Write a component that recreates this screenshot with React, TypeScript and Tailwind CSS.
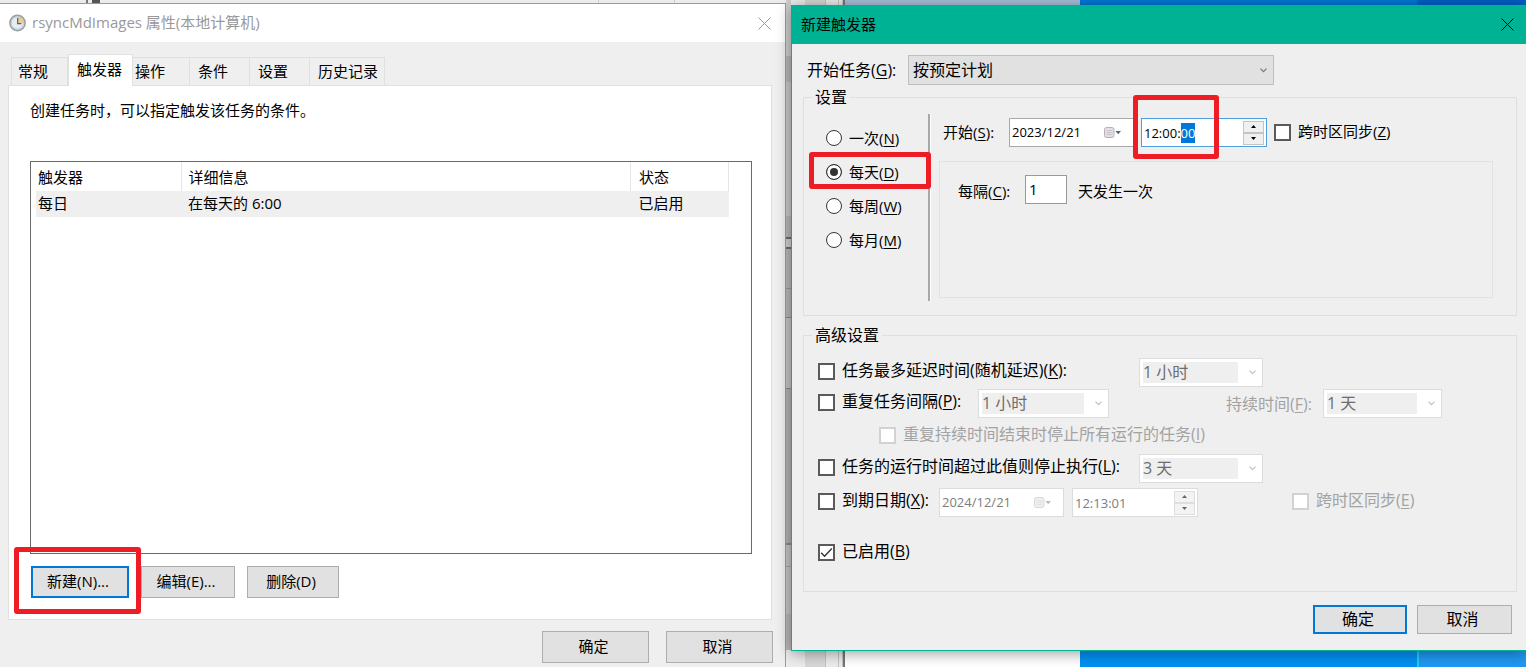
import { ReactNode, useEffect, useRef, useState } from "react";
import clsx from "clsx";

const tabs = ["常规", "触发器", "操作", "条件", "设置", "历史记录"];

const schedules = [
  { id: "once", text: "一次", hotkey: "N" },
  { id: "daily", text: "每天", hotkey: "D" },
  { id: "weekly", text: "每周", hotkey: "W" },
  { id: "monthly", text: "每月", hotkey: "M" },
];

function Hotkey({ children }: { children: string }) {
  return (
    <>
      (<span className="underline underline-offset-2">{children}</span>)
    </>
  );
}

function CloseIcon() {
  return (
    <svg width="13" height="13" viewBox="0 0 13 13" fill="none" stroke="currentColor" strokeWidth="1">
      <path d="M0.5 0.5l12 12M12.5 0.5l-12 12" />
    </svg>
  );
}

function ClockIcon() {
  return (
    <svg width="18" height="18" viewBox="0 0 18 18" fill="none">
      <circle cx="9.5" cy="9" r="7.6" fill="#e4edf3" stroke="#9aa0a4" strokeWidth="1.6" />
      <path d="M9.5 9V2.6A6.4 6.4 0 0 1 15.9 9z" fill="#ecd08c" />
      <circle cx="9.5" cy="9" r="6.2" stroke="#b9cad6" strokeWidth="0.9" />
      <path d="M9.7 4v5.6h3.8" stroke="#5d6468" strokeWidth="1.3" />
    </svg>
  );
}

function Chevron() {
  return (
    <svg width="7" height="5" viewBox="0 0 7 5" fill="none" stroke="currentColor" strokeWidth="1.2">
      <path d="M0.5 0.7l3 3 3-3" />
    </svg>
  );
}

// Red rectangle drawn around the control that the reader has to use
function Highlight({ className }: { className: string }) {
  return (
    <span
      className={clsx("pointer-events-none absolute z-10 rounded-[3px] border-5 border-[#ee1c25]", className)}
    />
  );
}

function Button({ children, primary, className }: { children: ReactNode; primary?: boolean; className?: string }) {
  return (
    <button
      type="button"
      className={clsx(
        "bg-[#e1e1e1] pb-0.5 text-black",
        primary ? "border-2 border-[#0078d7]" : "border border-[#adadad]",
        className
      )}
    >
      {children}
    </button>
  );
}

type CheckProps = {
  id: string;
  children: ReactNode;
  disabled?: boolean;
  defaultChecked?: boolean;
  className?: string;
};

function Check({ id, children, disabled, defaultChecked, className }: CheckProps) {
  return (
    <div className={clsx("flex h-[26px] shrink-0 items-center gap-[7px]", disabled && "text-[#a3a3a3]", className)}>
      <span className="relative flex">
        <input
          id={id}
          type="checkbox"
          disabled={disabled}
          defaultChecked={defaultChecked}
          className="peer size-[17px] appearance-none border-2 border-[#5a5a5a] bg-white disabled:border-[#d2d2d2]"
        />
        <svg
          viewBox="0 0 17 17"
          fill="none"
          stroke="#333"
          strokeWidth="1.4"
          className="pointer-events-none absolute inset-0 hidden size-[17px] peer-checked:block"
        >
          <path d="M3.2 8.8l3.4 3.4 7.2-7.6" />
        </svg>
      </span>
      <label htmlFor={id} className="whitespace-nowrap pb-0.5">
        {children}
      </label>
    </div>
  );
}

function DisabledSelect({ id, label, value, className }: { id: string; label?: string; value: string; className: string }) {
  return (
    <div className={clsx("flex h-[29px] shrink-0 items-center border border-[#dcdcdc] bg-white py-[3px] pl-[3px]", className)}>
      <select
        id={id}
        aria-label={label}
        disabled
        className="h-full min-w-0 flex-1 appearance-none bg-[#efefef] pb-0.5 leading-5 text-[#6d6d6d] opacity-100"
      >
        <option>{value}</option>
      </select>
      <span className="flex w-6 justify-center pl-1 text-[#c0c0c0]">
        <Chevron />
      </span>
    </div>
  );
}

function DateBox({ id, label, value, disabled }: { id: string; label?: string; value: string; disabled?: boolean }) {
  return (
    <div
      className={clsx(
        "flex h-[29px] w-[125px] shrink-0 items-center border bg-white pr-3 pl-0.5 text-[13px]",
        disabled ? "border-[#dcdcdc] text-[#7d7d7d]" : "border-[#a9a9a9] text-black"
      )}
    >
      <input id={id} aria-label={label} defaultValue={value} disabled={disabled} className="w-full min-w-0 flex-1 outline-none" />
      <svg width="17" height="12" viewBox="0 0 17 12" className={clsx("shrink-0", disabled && "opacity-50")}>
        <rect x="0.5" y="0.5" width="9.5" height="10" rx="2" fill="#e4dfe2" stroke="#b5b0b8" />
        <path d="M2.5 3.5h6M2.5 5.5h6M2.5 7.5h5" stroke="#c2bdc4" strokeWidth="0.8" />
        <path d="M11.5 4h5.5L14.2 7.2z" fill={disabled ? "#777" : "#4a5f8f"} />
      </svg>
    </div>
  );
}

function Spinner({ disabled }: { disabled?: boolean }) {
  const button = clsx(
    "flex h-3 w-[21px] items-center justify-center border",
    disabled ? "border-[#dedede] bg-[#f3f3f3] text-[#666]" : "border-[#c4c4c4] bg-[#f0f0f0] text-black"
  );
  return (
    <div className="flex shrink-0 flex-col">
      <button type="button" aria-label="增加" disabled={disabled} className={button}>
        <svg width="5" height="3" viewBox="0 0 5 3">
          <path d="M0 3h5L2.5 0z" fill="currentColor" />
        </svg>
      </button>
      <button type="button" aria-label="减少" disabled={disabled} className={button}>
        <svg width="5" height="3" viewBox="0 0 5 3">
          <path d="M0 0h5L2.5 3z" fill="currentColor" />
        </svg>
      </button>
    </div>
  );
}

function TimeBox({ label, value, disabled }: { label: string; value: string; disabled?: boolean }) {
  const input = useRef<HTMLInputElement>(null);

  // The seconds are the part being edited
  useEffect(() => {
    if (disabled) return;
    input.current?.focus();
    input.current?.setSelectionRange(6, 8);
  }, [disabled]);

  return (
    <div
      className={clsx(
        "flex h-[29px] w-[126px] items-center border bg-white px-0.5 text-[13px]",
        disabled ? "border-[#dcdcdc] text-[#7d7d7d]" : "border-[#4f9fe0] text-black"
      )}
    >
      <input
        ref={input}
        aria-label={label}
        defaultValue={value}
        disabled={disabled}
        className="h-5 min-w-0 flex-1 leading-5 outline-none selection:bg-[#0078d7] selection:text-white"
      />
      <Spinner disabled={disabled} />
    </div>
  );
}

function Desktop() {
  return (
    <div aria-hidden="true" className="absolute inset-0 flex overflow-hidden">
      <div className="flex flex-[843] bg-[#ececec]">
        <div className="flex-[86]" />
        <div className="w-0.5 bg-[#777]" />
        <div className="w-1" />
        <div className="w-2 bg-[#555]" />
        <div className="flex-[499] border-r border-[#cfcfcf]" />
        <div className="flex-[75] border-r border-[#cfcfcf]" />
        <div className="flex-[130]" />
        <div className="w-5 bg-[#d8d8d8]" />
        <div className="w-3.5 border-x border-[#c4c4c4]" />
        <div className="w-1 border-r border-[#c4c4c4]" />
      </div>
      <div className="w-0.5 bg-[#777]" />
      <div className="flex flex-[235] flex-col bg-white">
        <div className="h-10 bg-[#a9bfdb]" />
      </div>
      <div className="flex-[337] bg-linear-to-b from-[#0078d7] to-[#0290f4]" />
      <div className="w-0.5 bg-linear-to-b from-[#0068cc] to-[#20d0f0]" />
      <div className="flex-[107] bg-linear-to-b from-[#0060c8] to-[#2098f4]" />
    </div>
  );
}

// Sliver of the main window that shows between the two dialogs
function Gap() {
  return (
    <div aria-hidden="true" className="flex h-[650px] w-[5px] flex-col bg-[#c6c6c6]">
      <div className="h-14 bg-[#cfcfcf]" />
      <div className="h-[26px] bg-[#b9b9b9]" />
      <div className="h-[134px] bg-[#cbcbcb]" />
      <div className="h-[21px] bg-[#b9b9b9]" />
      <div className="h-3 border-y-2 border-[#6e6e6e] bg-[#d0d0d0]" />
      <div className="h-10 border-b border-[#999] bg-[#b9b9b9]" />
      <div className="h-[29px] border-b border-[#8b8b8b] bg-[#b9b9b9]" />
      <div className="h-[71px] border-b border-[#8b8b8b]" />
      <div className="h-[156px] border-b-2 border-[#8b8b8b] bg-[#b4b4b4]" />
      <div className="h-[22px] border-b border-[#a5a5a5]" />
      <div className="h-[47px]" />
      <div className="flex-1 bg-[#b9b9b9]" />
    </div>
  );
}

function PropertiesWindow() {
  const [active, setActive] = useState("触发器");

  return (
    <section className="mt-[3px] flex flex-col border-t border-r border-[#9b9b9b] bg-[#efefef]">
      <header className="flex h-[38px] items-center bg-white pr-[14px] pl-2 text-[#999]">
        <ClockIcon />
        <h1 className="ml-1.5 flex-1 pb-0.5">rsyncMdImages 属性(本地计算机)</h1>
        <button type="button" aria-label="关闭">
          <CloseIcon />
        </button>
      </header>

      <div className="flex flex-1 flex-col pt-3 pr-3 pb-1 pl-2">
        <div role="tablist" className="flex items-end pl-[3px]">
          {tabs.map((tab) => (
            <button
              key={tab}
              type="button"
              role="tab"
              aria-selected={tab === active}
              onClick={() => setActive(tab)}
              className={clsx(
                "border-[#e0e0e0] text-left",
                tab === active
                  ? "relative -mb-px h-8 w-[65px] border-x border-t bg-white pb-1 pl-2"
                  : "h-7 border-t border-r pb-0.5",
                tab === "常规" && "w-[57px] border-l pl-1.5",
                tab === "操作" && "w-[57px] pl-0.5",
                (tab === "条件" || tab === "设置") && "w-[60px] pl-2",
                tab === "历史记录" && "w-[75px] pl-2"
              )}
            >
              {tab}
            </button>
          ))}
        </div>

        <div className="mr-px flex flex-1 flex-col border border-[#e0e0e0] bg-white px-[21px] pb-[21px]">
          <p className="mt-[13px] leading-[22px]">创建任务时，可以指定触发该任务的条件。</p>

          <div className="mt-10 mr-[-2px] flex-1 border border-[#6a6a6a] pr-[22px] pl-[5px]">
            <table className="w-full table-fixed border-collapse text-left">
              <colgroup>
                <col className="w-[145px]" />
                <col />
                <col className="w-[98px]" />
              </colgroup>
              <thead>
                <tr className="h-[29px]">
                  <th className="border-r border-[#e5e5e5] pl-0.5 font-normal">触发器</th>
                  <th className="border-r border-[#e5e5e5] pl-[7px] font-normal">详细信息</th>
                  <th className="border-r border-[#e5e5e5] pl-2 font-normal">状态</th>
                </tr>
              </thead>
              <tbody>
                <tr className="h-[26px] bg-[#efefef]">
                  <td className="pb-0.5 pl-0.5">每日</td>
                  <td className="pb-0.5 pl-[7px]">在每天的 6:00</td>
                  <td className="pb-0.5 pl-2">已启用</td>
                </tr>
              </tbody>
            </table>
          </div>

          <div className="mt-3 ml-px flex h-8">
            <div className="relative flex">
              <Button primary className="w-[98px] pr-1">
                新建(N)...
              </Button>
              <Highlight className="-top-[19px] -right-3 -bottom-4 -left-[17px]" />
            </div>
            <Button className="ml-3 w-[94px] pr-1">编辑(E)...</Button>
            <Button className="ml-3 w-[92px] pr-1">删除(D)</Button>
          </div>
        </div>

        <footer className="mt-[11px] flex h-8 justify-end gap-[17px]">
          <Button className="w-[107px] pr-1">确定</Button>
          <Button className="w-[107px] pr-1">取消</Button>
        </footer>
      </div>
    </section>
  );
}

function TriggerWindow() {
  const [schedule, setSchedule] = useState("daily");

  return (
    <section className="relative mt-[5px] flex flex-col self-start border-b border-l border-[#00b294] bg-[#efefef] shadow-[0_2px_14px_rgba(0,0,0,0.4)]">
      <header className="flex h-[39px] items-center bg-[#00b294] pr-3 pl-[9px] text-black">
        <h2 className="flex-1 pb-0.5">新建触发器</h2>
        <button type="button" aria-label="关闭">
          <CloseIcon />
        </button>
      </header>

      <div className="pt-[11px] pr-[9px] pb-4 pl-[11px] text-base">
        <div className="flex h-[30px] items-center pl-1">
          <label htmlFor="begin" className="w-[101px] shrink-0">
            开始任务<Hotkey>G</Hotkey>:
          </label>
          <div className="relative h-full w-[366px]">
            <select id="begin" className="h-full w-full appearance-none border border-[#bfbfbf] bg-[#e1e1e1] pl-1">
              <option>按预定计划</option>
            </select>
            <span className="pointer-events-none absolute inset-y-0 right-[7px] flex items-center text-[#777]">
              <Chevron />
            </span>
          </div>
        </div>

        <fieldset className="border border-[#dfdfdf] px-2 pb-[14px]">
          <legend className="px-[3px] leading-6">设置</legend>
          <div className="flex pt-px text-[15px]">
            <div role="radiogroup" aria-label="设置" className="w-[116px] shrink-0 pt-[11px] pl-[14px]">
              {schedules.map(({ id, text, hotkey }) => (
                <div key={id} className="relative flex h-[34px] items-center gap-[7px]">
                  <input
                    id={id}
                    type="radio"
                    name="schedule"
                    checked={schedule === id}
                    onChange={() => setSchedule(id)}
                    className="size-4 appearance-none rounded-full border border-[#333] bg-white checked:bg-[#333] checked:shadow-[inset_0_0_0_3px_white]"
                  />
                  <label htmlFor={id}>
                    {text}
                    <Hotkey>{hotkey}</Hotkey>
                  </label>
                  {id === "daily" && <Highlight className="-top-[3px] -right-[3px] bottom-0 -left-[17px]" />}
                </div>
              ))}
            </div>

            <div className="mt-1 w-[3px] shrink-0 border-r border-white bg-[#a8a8a8]" />

            <div className="ml-2 min-w-0 flex-1 pt-2 pb-[3px]">
              <div className="flex h-[29px] items-center pl-1">
                <label htmlFor="start-date" className="w-[66px] shrink-0">
                  开始<Hotkey>S</Hotkey>:
                </label>
                <DateBox id="start-date" value="2023/12/21" />
                <div className="relative ml-[7px] shrink-0">
                  <TimeBox label="开始时间" value="12:00:00" />
                  <Highlight className="-top-[23px] -left-2 h-16 w-[86px]" />
                </div>
                <Check id="sync-start" className="ml-[7px]">
                  跨时区同步<Hotkey>Z</Hotkey>
                </Check>
              </div>

              <div className="mt-[14px] mr-[15px] h-[137px] border border-[#e2e2e2] pt-[13px] pl-[18px]">
                <div className="flex items-center">
                  <label htmlFor="interval" className="w-[67px] pt-1">
                    每隔<Hotkey>C</Hotkey>:
                  </label>
                  <input
                    id="interval"
                    defaultValue="1"
                    className="h-[29px] w-[42px] border border-[#999] bg-white pb-0.5 pl-[3px]"
                  />
                  <span className="ml-[11px] pt-1">天发生一次</span>
                </div>
              </div>
            </div>
          </div>
        </fieldset>

        <fieldset className="mt-[7px] border border-[#dfdfdf] px-2 pb-[26px]">
          <legend className="px-[3px] leading-6">高级设置</legend>
          <div className="flex flex-col pt-[11px] pl-1.5">
            <div className="flex items-start">
              <Check id="delay" className="w-[321px]">
                任务最多延迟时间(随机延迟)<Hotkey>K</Hotkey>:
              </Check>
              <DisabledSelect id="delay-value" label="延迟时间" value="1 小时" className="w-[124px]" />
            </div>
            <div className="mt-0.5 flex items-start">
              <Check id="repeat" className="w-[160px]">
                重复任务间隔<Hotkey>P</Hotkey>:
              </Check>
              <DisabledSelect id="repeat-value" label="间隔" value="1 小时" className="w-[131px]" />
              <label htmlFor="duration" className="ml-auto w-[97px] self-center text-[#a3a3a3]">
                持续时间<Hotkey>F</Hotkey>:
              </label>
              <DisabledSelect id="duration" value="1 天" className="mr-[66px] w-[119px]" />
            </div>
            <Check id="stop-all" disabled className="mt-1 mb-1.5 ml-[61px]">
              重复持续时间结束时停止所有运行的任务<Hotkey>I</Hotkey>
            </Check>
            <div className="flex items-start">
              <Check id="limit" className="w-[321px]">
                任务的运行时间超过此值则停止执行<Hotkey>L</Hotkey>:
              </Check>
              <DisabledSelect id="limit-value" label="运行时间" value="3 天" className="w-[124px]" />
            </div>
            <div className="mt-[5px] flex items-start">
              <Check id="expire" className="w-[121px]">
                到期日期<Hotkey>X</Hotkey>:
              </Check>
              <DateBox id="expire-date" label="到期日期" value="2024/12/21" disabled />
              <div className="ml-2 shrink-0">
                <TimeBox label="到期时间" value="12:13:01" disabled />
              </div>
              <Check id="sync-expire" disabled className="ml-[94px]">
                跨时区同步<Hotkey>E</Hotkey>
              </Check>
            </div>
            <Check id="enabled" defaultChecked className="mt-[22px]">
              已启用<Hotkey>B</Hotkey>
            </Check>
          </div>
        </fieldset>

        <footer className="mt-[13px] flex h-[29px] justify-end gap-2.5 pr-[5px]">
          <Button primary className="w-[94px] pr-1">
            确定
          </Button>
          <Button className="w-[95px] pr-1">取消</Button>
        </footer>
      </div>
    </section>
  );
}

export default function App() {
  return (
    <main className="relative min-h-screen overflow-hidden font-['Open_Sans','Noto_Sans_CJK_SC',sans-serif] text-[15px] leading-5 text-black">
      <Desktop />
      <div className="relative grid min-h-screen grid-cols-[786fr_5px_735fr]">
        <PropertiesWindow />
        <Gap />
        <TriggerWindow />
      </div>
    </main>
  );
}
